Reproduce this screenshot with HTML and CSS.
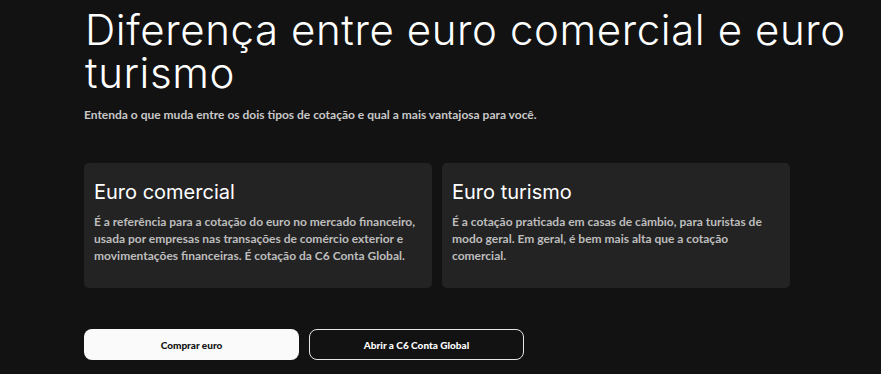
FILE: index.html
```html
<!DOCTYPE html>
<html lang="pt-BR">
<head>
  <meta charset="UTF-8">
  <title>Diferença entre euro comercial e euro turismo</title>
  <link rel="stylesheet" href="styles.css">
</head>
<body>
<section class="compare">
  <h1 class="compare-title">Diferença entre euro comercial e euro turismo</h1>
  <p class="compare-lead">Entenda o que muda entre os dois tipos de cotação e qual a mais vantajosa para você.</p>

  <div class="cards">
    <div class="card">
      <h2>Euro comercial</h2>
      <p>É a referência para a cotação do euro no mercado financeiro, usada por empresas nas transações de comércio exterior e movimentações financeiras. É cotação da C6 Conta Global.</p>
    </div>
    <div class="card">
      <h2>Euro turismo</h2>
      <p>É a cotação praticada em casas de câmbio, para turistas de modo geral. Em geral, é bem mais alta que a cotação comercial.</p>
    </div>
  </div>

  <div class="btnGroup">
    <button class="btn btn-light">Comprar euro</button>
    <button class="btn btn-outline">Abrir a C6 Conta Global</button>
  </div>
</section>
</body>
</html>
```

FILE: styles.css
```css
/*基础样式*/
html, body {
  margin: 0;
  background: #121212;
}
body {
  font-family: Lato, "Liberation Sans", sans-serif;
  color: #fff;
}
button {
  padding: 0;
  border: none;
  font-family: inherit;
  cursor: pointer;
}

.compare {
  padding: 8px 0 0 84px;
}

.compare-title {
  margin: 0;
  max-width: 790px;
  padding-left: 1px;
  font-family: Inter, "Liberation Sans", sans-serif;
  font-weight: 300;
  font-size: 42px;
  line-height: 43px;
  letter-spacing: 0.6px;
}

.compare-lead {
  margin: 13px 0 0;
  font-size: 12px;
  font-weight: 700;
  color: #c8c8c8;
}

.cards {
  display: flex;
  gap: 10px;
  margin-top: 41px;
}

.card {
  width: 348px;
  height: 125px;
  box-sizing: border-box;
  padding: 17px 10px 0;
  background: #232323;
  border-radius: 5px;
}

.card h2 {
  margin: 0;
  font-family: Inter, "Liberation Sans", sans-serif;
  font-weight: 400;
  font-size: 20px;
  line-height: 24px;
  letter-spacing: 0;
}

.card p {
  margin: 9px 0 0;
  font-size: 12px;
  font-weight: 700;
  line-height: 17px;
  color: #bdbdbd;
}

.btnGroup {
  display: flex;
  gap: 10px;
  margin-top: 41px;
}

.btn {
  width: 215px;
  height: 31px;
  border-radius: 8px;
  font-size: 10px;
  font-weight: 900;
}

.btn-light {
  background: #fafafa;
  color: #111;
}

.btn-outline {
  background: transparent;
  color: #fff;
  border: 1px solid #e6e6e6;
}
```
